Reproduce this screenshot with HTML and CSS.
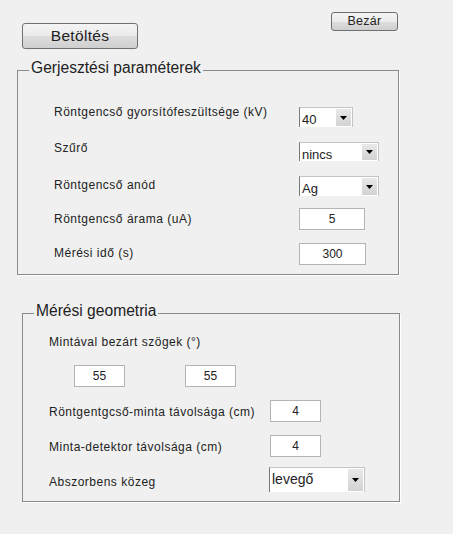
FILE: index.html
```html
<!DOCTYPE html>
<html lang="hu">
<head>
<meta charset="utf-8">
<title>Paraméterek</title>
<link rel="stylesheet" href="styles.css">
</head>
<body>
<div class="toolbar">
  <button class="btn btn-load" type="button">Betöltés</button>
  <button class="btn btn-close" type="button">Bezár</button>
</div>

<fieldset class="panel panel-1">
  <legend>Gerjesztési paraméterek</legend>
  <div class="panel-body body-1">
    <div class="row">
      <span class="label lab-1 off-n2">Röntgencső gyorsítófeszültsége (kV)</span>
      <div class="select sel-kv"><span class="val">40</span><span class="arrow"><svg width="7" height="4" viewBox="0 0 7 4"><polygon points="0,0 7,0 3.5,4" fill="#000"/></svg></span></div>
    </div>
    <div class="row gap-15">
      <span class="label lab-1 off-n1">Szűrő</span>
      <div class="select sel-wide h19"><span class="val">nincs</span><span class="arrow"><svg width="7" height="4" viewBox="0 0 7 4"><polygon points="0,0 7,0 3.5,4" fill="#000"/></svg></span></div>
    </div>
    <div class="row gap-15">
      <span class="label lab-1 off-2">Röntgencső anód</span>
      <div class="select sel-wide"><span class="val">Ag</span><span class="arrow"><svg width="7" height="4" viewBox="0 0 7 4"><polygon points="0,0 7,0 3.5,4" fill="#000"/></svg></span></div>
    </div>
    <div class="row gap-12">
      <span class="label lab-1 off-4">Röntgencső árama (uA)</span>
      <input class="field w66" type="text" value="5" readonly>
    </div>
    <div class="row gap-13">
      <span class="label lab-1 off-3">Mérési idő (s)</span>
      <input class="field w67" type="text" value="300" readonly>
    </div>
  </div>
</fieldset>

<fieldset class="panel panel-2">
  <legend>Mérési geometria</legend>
  <div class="panel-body body-2">
    <div class="label">Mintával bezárt szögek (°)</div>
    <div class="angles">
      <input class="field w51" type="text" value="55" readonly>
      <input class="field w51" type="text" value="55" readonly>
    </div>
    <div class="row gap-13">
      <span class="label lab-2 off-5">Röntgentgcső-minta távolsága (cm)</span>
      <input class="field w51" type="text" value="4" readonly>
    </div>
    <div class="row gap-13">
      <span class="label lab-2 off-5">Minta-detektor távolsága (cm)</span>
      <input class="field w51" type="text" value="4" readonly>
    </div>
    <div class="row gap-10">
      <span class="label lab-2b off-8">Abszorbens közeg</span>
      <div class="select sel-medium"><span class="val">levegő</span><span class="arrow"><svg width="7" height="4" viewBox="0 0 7 4"><polygon points="0,0 7,0 3.5,4" fill="#000"/></svg></span></div>
    </div>
  </div>
</fieldset>
</body>
</html>
```
FILE: styles.css
```css
html, body {
  margin: 0;
  padding: 0;
}
body {
  width: 453px;
  height: 534px;
  overflow: hidden;
  background: #f0f0f0;
  font-family: "Liberation Sans", Arial, sans-serif;
  color: #222;
}

/* Top buttons */
.toolbar {
  display: flex;
  align-items: flex-start;
  padding-left: 22px;
}
.btn {
  box-sizing: border-box;
  padding: 0;
  border: 1px solid #707070;
  border-radius: 3px;
  background: linear-gradient(#f4f4f4 0%, #ebebeb 50%, #dddddd 51%, #cfcfcf 100%);
  color: #222;
  font-family: inherit;
  letter-spacing: 0.3px;
}
.btn-load {
  width: 116px;
  height: 26px;
  margin-top: 23px;
  font-size: 15.5px;
}
.btn-close {
  width: 67px;
  height: 19px;
  margin-top: 12px;
  margin-left: 193px;
  font-size: 12.5px;
  line-height: 15px;
}

/* Panels */
.panel {
  box-sizing: border-box;
  min-width: 0;
  margin: 0;
  padding: 0;
  border: 1px solid #8a8a8a;
  box-shadow: 1px 1px 0 #ffffff;
}
.panel legend {
  margin-left: 11px;
  padding: 0 2px 4px;
  font-size: 15.6px;
  line-height: 18px;
}
.panel-1 {
  width: 382px;
  margin: 10px 0 0 17px;
}
.panel-2 {
  width: 378px;
  margin: 27px 0 0 22px;
}
.body-1 {
  padding: 26px 0 9px 36px;
}
.body-2 {
  padding: 11px 0 9px 26px;
}

.row {
  display: flex;
  align-items: flex-start;
}
.gap-10 { margin-top: 10px; }
.gap-12 { margin-top: 12px; }
.gap-13 { margin-top: 13px; }
.gap-15 { margin-top: 15px; }

.label {
  font-size: 12px;
  line-height: 14px;
  letter-spacing: 0.5px;
  white-space: nowrap;
}
.lab-1 { width: 245px; flex: none; }
.lab-2 { width: 221px; flex: none; }
.lab-2b { width: 220px; flex: none; }
.off-n2 { margin-top: -2px; }
.off-n1 { margin-top: -1px; }
.off-2 { margin-top: 2px; }
.off-3 { margin-top: 3px; }
.off-4 { margin-top: 4px; }
.off-5 { margin-top: 5px; }
.off-8 { margin-top: 8px; }

/* Popup menus */
.select {
  box-sizing: border-box;
  display: flex;
  height: 20px;
  background: #ffffff;
  border-top: 1px solid #c4c4c4;
  border-left: 1px solid #7a7a7a;
  border-right: 1px solid #c4c4c4;
  font-size: 13px;
}
.select .val {
  flex: 1;
  padding-left: 2px;
  line-height: 19px;
  padding-top: 2px;
  box-sizing: border-box;
}
.select .arrow {
  width: 15px;
  margin: 1px 1px 1px 0;
  display: flex;
  align-items: center;
  justify-content: center;
  background: linear-gradient(#e9e9e9, #d2d2d2);
}
.sel-kv { width: 54px; }
.sel-wide { width: 80px; }
.h19 { height: 19px; }
.sel-medium { width: 96px; height: 25px; }
.sel-medium .val { line-height: 20px; padding-top: 1px; font-size: 14px; }

/* Edit boxes */
.field {
  box-sizing: border-box;
  height: 22px;
  margin: 0;
  padding: 0;
  border: 1px solid #b4b4b4;
  border-radius: 0;
  background: #ffffff;
  color: #222;
  font-family: inherit;
  font-size: 12px;
  text-align: center;
  outline: none;
}
.w51 { width: 51px; }
.w66 { width: 66px; }
.w67 { width: 67px; }

.angles {
  display: flex;
  gap: 60px;
  margin: 16px 0 0 25px;
}
```
